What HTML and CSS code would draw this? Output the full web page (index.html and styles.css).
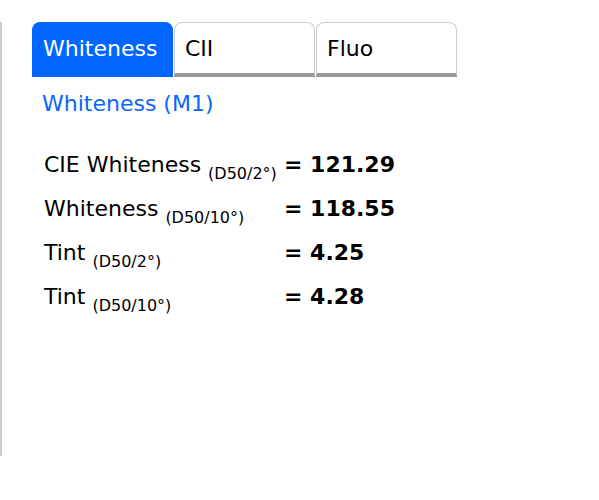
FILE: index.html
```html
<!DOCTYPE html>
<html>
<head>
	<title>Whiteness</title>
	<meta charset="utf-8">
	<link rel="stylesheet" href="styles.css">
</head>
<body>
<div class="panel">
	<ul class="tabs">
		<li class="active">Whiteness</li>
		<li>CII</li>
		<li>Fluo</li>
	</ul>
	<div class="title">Whiteness (M1)</div>
	<ul class="results">
		<li><span class="name">CIE Whiteness <sub>(D50/2°)</sub></span><span class="val">= 121.29</span></li>
		<li><span class="name">Whiteness <sub>(D50/10°)</sub></span><span class="val">= 118.55</span></li>
		<li><span class="name">Tint <sub>(D50/2°)</sub></span><span class="val">= 4.25</span></li>
		<li><span class="name">Tint <sub>(D50/10°)</sub></span><span class="val">= 4.28</span></li>
	</ul>
</div>
</body>
</html>
```
FILE: styles.css
```css
*{
	margin: 0;
	padding: 0;
}
body{
	font-family: "DejaVu Sans", sans-serif;
	color: #000;
	background: #fff;
}
li{
	list-style: none;
}
.panel{
	margin-top: 22px;
	height: 434px;
	border-left: 2px solid #ccc;
	padding-left: 30px;
}
.tabs{
	display: flex;
	gap: 1px;
}
.tabs li{
	box-sizing: border-box;
	width: 141px;
	height: 55px;
	padding: 11px 0 0 10px;
	font-size: 22px;
	line-height: 30px;
	border: 1px solid #ccc;
	border-bottom: 4px solid #999;
	border-radius: 8px 8px 0 0;
	background: #fff;
}
.tabs li.active{
	background: #0066ff;
	border-color: #0066ff;
	color: #fff;
}
.title{
	color: #0a66f5;
	font-size: 22px;
	line-height: 30px;
	padding: 12px 0 0 10px;
}
.results{
	padding: 31px 0 0 12px;
}
.results li{
	display: flex;
	height: 44px;
	font-size: 22px;
	line-height: 30px;
}
.name{
	width: 240px;
}
.name sub{
	font-size: 16px;
	vertical-align: -7px;
}
.val{
	font-weight: bold;
}
```
